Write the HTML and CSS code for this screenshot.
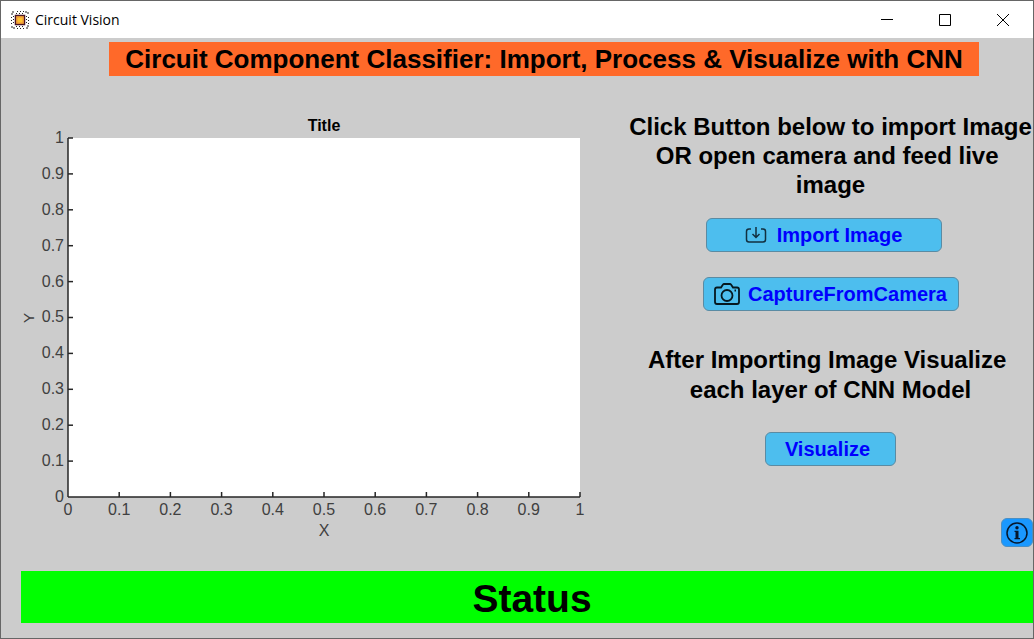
FILE: index.html
```html
<!DOCTYPE html>
<html lang="en">
<head>
<meta charset="utf-8">
<title>Circuit Vision</title>
<link rel="stylesheet" href="styles.css">
</head>
<body>
<div class="window">
  <header class="titlebar">
    <svg class="app-icon" viewBox="0 0 20 20" aria-hidden="true">
      <path d="M2 5V2h3M15 2h3v3M18 15v3h-3M5 18H2v-3" fill="none" stroke="#222" stroke-dasharray="2 1"/>
      <path d="M7 1.500h7M7 18.500h7M1.500 7v7M18.500 7v7M6 3.500h9M6 16.500h9M3.500 6v9M16.500 6v9" stroke="#222" stroke-dasharray="1 2"/>
      <rect x="5.500" y="5.500" width="9" height="9" fill="#fdc530" stroke="#4a1525" stroke-width="1.500"/>
      <rect x="7" y="7" width="6" height="6" fill="none" stroke="#f08a3c"/>
    </svg>
    <span class="app-name">Circuit Vision</span>
    <div class="window-controls">
      <button class="control" aria-label="Minimize"><svg viewBox="0 0 12 12"><path d="M0 5.500h12"/></svg></button>
      <button class="control" aria-label="Maximize"><svg viewBox="0 0 12 12"><path d="M.5.5h11v11H.5z"/></svg></button>
      <button class="control" aria-label="Close"><svg viewBox="0 0 12 12"><path d="M0 0l12 12M12 0L0 12"/></svg></button>
    </div>
  </header>

  <h1 class="banner">Circuit Component Classifier: Import, Process &amp; Visualize with CNN</h1>

  <main class="content">
    <figure class="chart">
      <figcaption class="chart-title">Title</figcaption>
      <div class="y-name"><span>Y</span></div>
      <div class="y-ticks">
        <span>1</span><span>0.9</span><span>0.8</span><span>0.7</span><span>0.6</span><span>0.5</span><span>0.4</span><span>0.3</span><span>0.2</span><span>0.1</span><span>0</span>
      </div>
      <div class="plot">
        <svg class="marks" aria-hidden="true">
          <line x1="0" x2="5" y1="0" y2="0"/>
          <line x1="0" x2="5" y1="10%" y2="10%"/><line x1="0" x2="5" y1="20%" y2="20%"/><line x1="0" x2="5" y1="30%" y2="30%"/>
          <line x1="0" x2="5" y1="40%" y2="40%"/><line x1="0" x2="5" y1="50%" y2="50%"/><line x1="0" x2="5" y1="60%" y2="60%"/>
          <line x1="0" x2="5" y1="70%" y2="70%"/><line x1="0" x2="5" y1="80%" y2="80%"/><line x1="0" x2="5" y1="90%" y2="90%"/>
          <line x1="0" x2="0" y1="0" y2="100%"/><line x1="0" x2="100%" y1="100%" y2="100%"/>
          <svg y="100%" overflow="visible">
            <line x1="10%" x2="10%" y1="0" y2="-5"/><line x1="20%" x2="20%" y1="0" y2="-5"/><line x1="30%" x2="30%" y1="0" y2="-5"/>
            <line x1="40%" x2="40%" y1="0" y2="-5"/><line x1="50%" x2="50%" y1="0" y2="-5"/><line x1="60%" x2="60%" y1="0" y2="-5"/>
            <line x1="70%" x2="70%" y1="0" y2="-5"/><line x1="80%" x2="80%" y1="0" y2="-5"/><line x1="90%" x2="90%" y1="0" y2="-5"/>
            <line x1="100%" x2="100%" y1="0" y2="-5"/>
          </svg>
        </svg>
      </div>
      <div class="x-ticks">
        <span>0</span><span>0.1</span><span>0.2</span><span>0.3</span><span>0.4</span><span>0.5</span><span>0.6</span><span>0.7</span><span>0.8</span><span>0.9</span><span>1</span>
      </div>
      <div class="x-name">X</div>
    </figure>

    <section class="panel">
      <p class="hint">Click Button below to import Image<br>OR open camera and feed live&nbsp;<br>image</p>
      <button class="action import">
        <svg class="import-icon" viewBox="0 0 22 16" aria-hidden="true"><path d="M6 2H4Q1.500 2 1.500 4.500v8Q1.500 15 4 15h14q2.500 0 2.500-2.500v-8Q20.500 2 18 2h-2M11 0v10M7.500 7L11 10.500 14.500 7"/></svg>
        Import Image
      </button>
      <button class="action capture">
        <svg class="camera-icon" viewBox="0 0 26 22" aria-hidden="true"><path d="M3 4.500h4L9 1.500q.4-.5 1-.5h6q.6 0 1 .5l2 3h4q2 0 2 2V19q0 2-2 2H3q-2 0-2-2V6.500q0-2 2-2z"/><circle cx="13" cy="12.500" r="5.500"/><path d="M20.500 7.500h1.500"/></svg>
        CaptureFromCamera
      </button>
      <p class="hint second">After Importing Image Visualize&nbsp;<br>each layer of CNN Model</p>
      <button class="action visualize">Visualize</button>
      <button class="info" aria-label="Information">
        <svg viewBox="0 0 22 22" aria-hidden="true"><circle cx="11" cy="11" r="10" fill="none" stroke="#06172c" stroke-width="1.500"/><circle cx="11" cy="5.800" r="1.700"/><path d="M8.500 8.800h4v7.200H14v1.200H8.500V16h1v-6h-1z"/></svg>
      </button>
    </section>
  </main>

  <footer class="status" role="status">Status</footer>
</div>
</body>
</html>
```
FILE: styles.css
```css
* { box-sizing: border-box; }
body { margin: 0; background: #ccc; color: #000; font-family: "Liberation Sans", Arial, sans-serif; }
button { margin: 0; padding: 0; font: inherit; }

.window {
  display: flex;
  flex-direction: column;
  min-height: 100vh;
  border: 1px solid #666;
  background: #ccc;
}

.titlebar {
  display: flex;
  align-items: center;
  height: 37px;
  padding-left: 9px;
  background: #fff;
}
.app-icon { width: 20px; height: 20px; margin-right: 5px; }
.app-name { font: 14px "Open Sans", "Noto Sans", sans-serif; }
.window-controls { display: flex; margin-left: auto; }
.control {
  display: grid;
  place-items: center;
  width: 58px;
  height: 37px;
  border: 0;
  background: none;
}
.control:last-child { margin-right: 1px; }
.control svg { width: 12px; height: 12px; fill: none; stroke: #000; }

.banner {
  align-self: center;
  margin: 4px 0 0 54px;
  padding: 1px 16px 0;
  background: #ff6929;
  font-size: 26px;
  line-height: 33px;
}

.content {
  display: grid;
  grid-template-columns: 559fr 405fr;
  column-gap: 48px;
  padding: 36px 0 0 20px;
}

.chart {
  display: grid;
  grid-template-columns: 16px 31px 1fr;
  grid-template-rows: 20px 359px auto auto;
  align-content: start;
  margin: 6px 0 0;
  color: #404040;
  font-size: 16px;
  line-height: 16px;
}
.chart-title { grid-column: 3; color: #000; font-weight: bold; text-align: center; }
.y-name { display: grid; place-items: center; font-size: 15px; }
.y-name span { transform: rotate(-90deg); }
.y-ticks {
  display: flex;
  flex-direction: column;
  justify-content: space-between;
  margin: -8px 4px -8px 0;
  text-align: right;
}
.plot { background: #fff; }
.marks { display: block; width: 100%; height: 100%; overflow: visible; stroke: #262626; stroke-width: 1.5; }
.x-ticks {
  grid-column: 3;
  display: flex;
  justify-content: space-between;
  margin: 5px -16px 0;
}
.x-ticks span { width: 32px; text-align: center; }
.x-name { grid-column: 3; margin-top: 5px; text-align: center; }

.panel { display: flex; flex-direction: column; align-items: center; }
.hint { margin: 0; font-size: 24px; font-weight: bold; line-height: 29px; text-align: center; white-space: nowrap; }
.second { margin-top: 34px; line-height: 30px; }
.action {
  display: flex;
  align-items: center;
  justify-content: center;
  height: 34px;
  border: 1px solid #5a8ba3;
  border-radius: 6px;
  background: #4dbeee;
  color: #00f;
  font-size: 20px;
  font-weight: bold;
}
.action svg { fill: none; stroke: #123040; stroke-width: 1.5; }
.import { width: 236px; margin: 19px 14px 0 0; gap: 10px; }
.capture { width: 256px; margin-top: 25px; gap: 8px; }
.capture svg { stroke: #06181f; stroke-width: 1.8; }
.visualize { width: 131px; margin-top: 27px; padding-right: 6px; }
.import-icon { width: 22px; height: 16px; }
.camera-icon { width: 26px; height: 22px; }
.info {
  display: grid;
  place-items: center;
  align-self: flex-end;
  width: 32px;
  height: 29px;
  margin-top: 52px;
  border: 1px solid #4a8fc4;
  border-radius: 6px;
  background: #1a98ff;
}
.info svg { width: 22px; height: 22px; fill: #06172c; }

.status {
  margin: 24px 0 15px 20px;
  padding: 4px 0 0 10px;
  background: #0f0;
  font-size: 39px;
  font-weight: bold;
  line-height: 48px;
  text-align: center;
}
```
